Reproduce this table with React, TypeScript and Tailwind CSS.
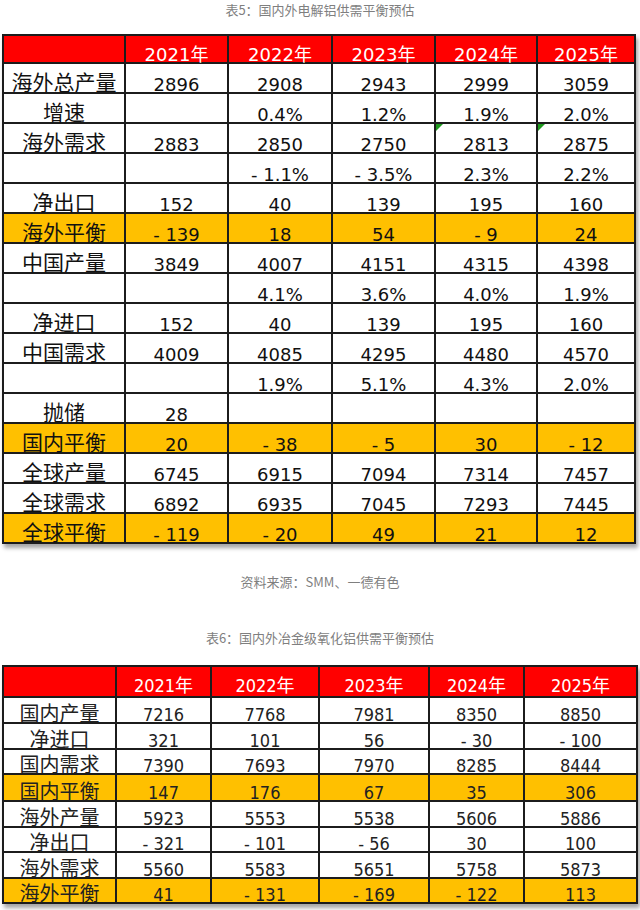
import React from "react";

type Row1 = { label: string; vals: string[]; orange?: boolean; marks?: number[] };

const t1: Row1[] = [
  { label: "海外总产量", vals: ["2896", "2908", "2943", "2999", "3059"] },
  { label: "增速", vals: ["", "0.4%", "1.2%", "1.9%", "2.0%"] },
  { label: "海外需求", vals: ["2883", "2850", "2750", "2813", "2875"], marks: [3, 4] },
  { label: "", vals: ["", "- 1.1%", "- 3.5%", "2.3%", "2.2%"] },
  { label: "净出口", vals: ["152", "40", "139", "195", "160"] },
  { label: "海外平衡", vals: ["- 139", "18", "54", "- 9", "24"], orange: true },
  { label: "中国产量", vals: ["3849", "4007", "4151", "4315", "4398"] },
  { label: "", vals: ["", "4.1%", "3.6%", "4.0%", "1.9%"] },
  { label: "净进口", vals: ["152", "40", "139", "195", "160"] },
  { label: "中国需求", vals: ["4009", "4085", "4295", "4480", "4570"] },
  { label: "", vals: ["", "1.9%", "5.1%", "4.3%", "2.0%"] },
  { label: "抛储", vals: ["28", "", "", "", ""] },
  { label: "国内平衡", vals: ["20", "- 38", "- 5", "30", "- 12"], orange: true },
  { label: "全球产量", vals: ["6745", "6915", "7094", "7314", "7457"] },
  { label: "全球需求", vals: ["6892", "6935", "7045", "7293", "7445"] },
  { label: "全球平衡", vals: ["- 119", "- 20", "49", "21", "12"], orange: true },
];

const t2: Row1[] = [
  { label: "国内产量", vals: ["7216", "7768", "7981", "8350", "8850"] },
  { label: "净进口", vals: ["321", "101", "56", "- 30", "- 100"] },
  { label: "国内需求", vals: ["7390", "7693", "7970", "8285", "8444"] },
  { label: "国内平衡", vals: ["147", "176", "67", "35", "306"], orange: true },
  { label: "海外产量", vals: ["5923", "5553", "5538", "5606", "5886"] },
  { label: "净出口", vals: ["- 321", "- 101", "- 56", "30", "100"] },
  { label: "海外需求", vals: ["5560", "5583", "5651", "5758", "5873"] },
  { label: "海外平衡", vals: ["41", "- 131", "- 169", "- 122", "113"], orange: true },
];

const t2Heights = ["h-[26px]", "h-[26px]", "h-[25px]", "h-[27px]", "h-[26px]", "h-[25px]", "h-[26px]", "h-[25px]"];

const years = ["2021年", "2022年", "2023年", "2024年", "2025年"];

function Caption({ children }: { children: React.ReactNode }) {
  return (
    <div className="h-[19px] text-center text-[13px] leading-[19px] text-[#7f7f7f] font-['Noto_Sans_CJK_SC',sans-serif]">
      {children}
    </div>
  );
}

export default function App() {
  return (
    <div className="w-[640px] h-[910px] bg-white overflow-hidden">
      <Caption>表5：国内外电解铝供需平衡预估</Caption>

      <div className="mt-[15px] ml-[2px] w-[634px] grid grid-cols-[122px_103px_104px_103px_102px_98px] border-l-2 border-t-2 border-[#1c1c1c] shadow-[2px_4px_4px_rgba(0,0,0,0.35)]">
        <div className="h-[28px] bg-[#ff0000] border-r-2 border-b-2 border-[#1c1c1c]" />
        {years.map((y) => (
          <div
            key={y}
            className="h-[28px] bg-[#ff0000] border-r-2 border-b-2 border-[#1c1c1c] flex items-end justify-center text-white text-[18px] leading-[14px] font-['DejaVu_Sans','Noto_Sans_CJK_SC',sans-serif]"
          >
            {y}
          </div>
        ))}
        {t1.map((r, ri) => (
          <React.Fragment key={ri}>
            <div
              className={`h-[30px] border-r-2 border-b-2 border-[#1c1c1c] flex items-end justify-center pb-[4px] text-[21px] leading-[14px] text-[#111] whitespace-nowrap font-['Noto_Sans_CJK_SC',sans-serif] ${r.orange ? "bg-[#ffc000]" : "bg-white"}`}
            >
              {r.label}
            </div>
            {r.vals.map((v, vi) => (
              <div
                key={vi}
                className={`relative h-[30px] border-r-2 border-b-2 border-[#1c1c1c] flex items-end justify-center text-[18px] leading-[14px] text-[#111] whitespace-pre font-['DejaVu_Sans',sans-serif] ${r.orange ? "bg-[#ffc000]" : "bg-white"}`}
              >
                {r.marks && r.marks.includes(vi) && (
                  <span className="absolute left-0 top-0 w-0 h-0 border-t-[7px] border-r-[7px] border-t-[#1e9a1e] border-r-transparent" />
                )}
                {v}
              </div>
            ))}
          </React.Fragment>
        ))}
      </div>

      <div className="mt-[28px]">
        <Caption>资料来源：SMM、一德有色</Caption>
      </div>
      <div className="mt-[37px]">
        <Caption>表6：国内外冶金级氧化铝供需平衡预估</Caption>
      </div>

      <div className="mt-[18px] ml-[2px] w-[636px] grid grid-cols-[113px_95px_108px_110px_95px_113px] border-l-2 border-t-2 border-[#1c1c1c] shadow-[2px_4px_4px_rgba(0,0,0,0.35)]">
        <div className="h-[31px] bg-[#ff0000] border-r-2 border-b-2 border-[#1c1c1c]" />
        {years.map((y) => (
          <div
            key={y}
            className="h-[31px] bg-[#ff0000] border-r-2 border-b-2 border-[#1c1c1c] flex items-end justify-center pb-[3px] text-white text-[18px] leading-[14px] font-stretch-condensed font-['DejaVu_Sans_Condensed','DejaVu_Sans','Noto_Sans_CJK_SC',sans-serif]"
          >
            {y}
          </div>
        ))}
        {t2.map((r, ri) => (
          <React.Fragment key={ri}>
            <div
              className={`${t2Heights[ri]} border-r-2 border-b-2 border-[#1c1c1c] flex items-end justify-center text-[20px] leading-[18px] text-[#222] whitespace-nowrap font-['Noto_Sans_CJK_SC',sans-serif] ${r.orange ? "bg-[#ffc000]" : "bg-white"}`}
            >
              {r.label}
            </div>
            {r.vals.map((v, vi) => (
              <div
                key={vi}
                className={`${t2Heights[ri]} border-r-2 border-b-2 border-[#1c1c1c] flex items-end justify-center text-[18px] leading-[14px] text-[#222] whitespace-pre font-stretch-condensed font-['DejaVu_Sans_Condensed','DejaVu_Sans',sans-serif] ${r.orange ? "bg-[#ffc000]" : "bg-white"}`}
              >
                {v}
              </div>
            ))}
          </React.Fragment>
        ))}
      </div>
    </div>
  );
}
